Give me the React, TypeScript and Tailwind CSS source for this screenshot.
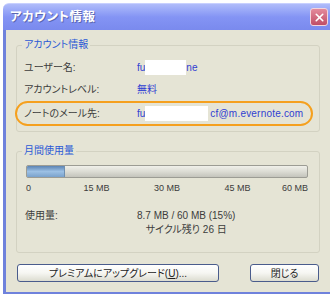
import { X } from 'lucide-react';

const font = "font-['Liberation_Sans','Noto_Sans_CJK_JP',sans-serif] [font-feature-settings:'palt']";

function Redacted({ width }: { width: number }) {
  return <span className="inline-block h-[15px] bg-white align-middle" style={{ width }} />;
}

export default function App() {
  const usedPercent = 13.5;
  const scale = ['0', '15 MB', '30 MB', '45 MB', '60 MB'];

  return (
    <div className={`w-[330px] h-[299px] bg-white overflow-hidden pt-[3px] pl-[3px] ${font}`}>
      <div className="w-[327px] h-[291px] flex flex-col">
        {/* title bar */}
        <div className="h-[27px] flex items-center pl-[7px] pr-[2px] rounded-tl-[6px] bg-gradient-to-b from-[#b0bcfa] via-[#8494f4] to-[#7a8aee] border-t border-[#c8d0ff]">
          <span className="text-white text-[12.5px] font-bold tracking-[0.5px] [text-shadow:1px_1px_0_#5a66b0]">
            アカウント情報
          </span>
          <div className="ml-auto w-[18px] h-[18px] rounded-[3px] border border-[#f3d4dc] bg-gradient-to-b from-[#e48a9c] to-[#c04d66] flex items-center justify-center">
            <X className="w-[13px] h-[13px] text-white" strokeWidth={3} />
          </div>
        </div>

        {/* body */}
        <div className="flex-1 bg-[#e5e4d5] border-l-[3px] border-b-[2px] border-[#6f82dc] flex flex-col">
          <fieldset className="ml-[10px] mt-[9px] w-[304px] border border-[#d3d2c2] rounded-[3px] pb-[5px]">
            <legend className="ml-[5px] px-[2px] text-[10px] leading-[12px] text-[#2c5ad6]">アカウント情報</legend>
            <div className="mt-[5px] h-[22px] flex items-center pl-[7px] text-[10px] text-[#3c3c3c]">
              <span className="w-[113px]">ユーザー名:</span>
              <span className="text-[#3040d2] flex items-center">
                fu<Redacted width={41} />ne
              </span>
            </div>
            <div className="h-[22px] flex items-center pl-[7px] text-[10px] text-[#3c3c3c]">
              <span className="w-[113px]">アカウントレベル:</span>
              <span className="text-[#3040d2]">無料</span>
            </div>
            <div className="mt-[1px] -ml-[2px] w-[298px] h-[25px] flex items-center pl-[7px] border-2 border-[#f5a01e] rounded-full text-[10px] text-[#3c3c3c]">
              <span className="w-[113px]">ノートのメール先:</span>
              <span className="text-[#3040d2] flex items-center">
                fu<Redacted width={63} />
                <span className="ml-[2px] tracking-[0.2px]">cf@m.evernote.com</span>
              </span>
            </div>
          </fieldset>

          <fieldset className="ml-[10px] mt-[13px] w-[304px] border border-[#d3d2c2] rounded-[3px] pb-[15px]">
            <legend className="ml-[5px] px-[2px] text-[10px] leading-[12px] text-[#2c5ad6]">月間使用量</legend>
            <div className="mt-[8px] ml-[9px] w-[282px] h-[13px] rounded-[2px] border border-[#9c9c94] bg-gradient-to-b from-[#f0f0ea] via-[#dcdcd4] to-[#c4c4bc] overflow-hidden">
              <div
                className="h-full border-r border-[#6f8fb0] bg-gradient-to-b from-[#5c84b4] via-[#9cc0e4] to-[#7aa2cc]"
                style={{ width: `${usedPercent}%` }}
              />
            </div>
            <div className="mt-[4px] ml-[9px] w-[282px] h-[12px] grid grid-cols-[1fr_2fr_2fr_2fr_1fr] text-[9px] leading-[12px] text-[#3c3c3c]">
              {scale.map((s, i) => (
                <span
                  key={s}
                  className={i === 0 ? 'text-left' : i === 4 ? 'text-right' : 'text-center'}
                >
                  {s}
                </span>
              ))}
            </div>
            <div className="mt-[15px] flex pl-[8px] text-[10px] leading-[14px] text-[#3c3c3c]">
              <span className="w-[112px]">使用量:</span>
              <div className="flex flex-col items-center">
                <span>8.7 MB / 60 MB (15%)</span>
                <span>サイクル残り 26 日</span>
              </div>
            </div>
          </fieldset>

          <div className="mt-[11px] ml-[11px] flex gap-[31px]">
            <button className="w-[202px] h-[18px] rounded-[3px] border border-[#4a5c8c] bg-gradient-to-b from-white via-[#f6f6f2] to-[#dcdcd0] text-[10px] text-[#222]">
              プレミアムにアップグレード(<span className="underline">U</span>)...
            </button>
            <button className="w-[69px] h-[18px] rounded-[3px] border border-[#4a5c8c] bg-gradient-to-b from-white via-[#f6f6f2] to-[#dcdcd0] text-[10px] text-[#222]">
              閉じる
            </button>
          </div>
        </div>
      </div>
    </div>
  );
}
